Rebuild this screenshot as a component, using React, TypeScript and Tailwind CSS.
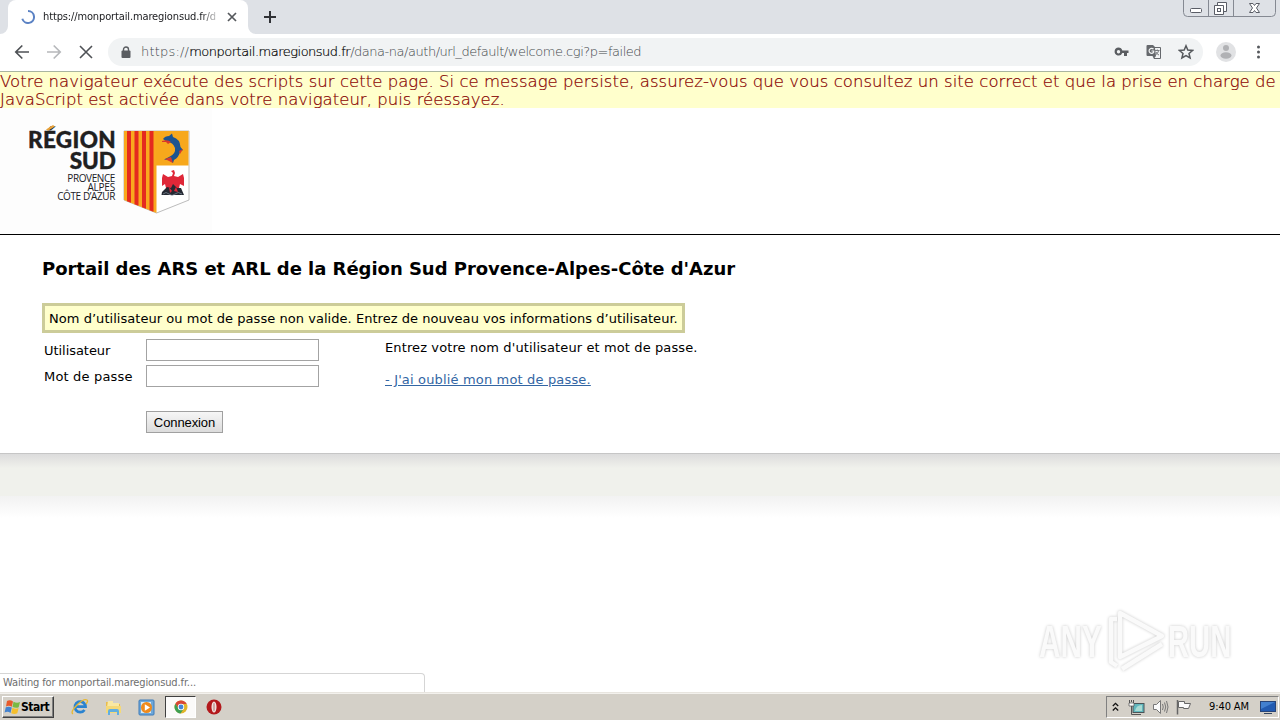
import React from "react";

const verdana = "font-['DejaVu_Sans',Verdana,sans-serif]";
const tahoma = "font-['DejaVu_Sans_Condensed','DejaVu_Sans',Tahoma,sans-serif] [font-stretch:condensed]";

function TabStrip() {
  return (
    <div className="relative flex h-[34px] shrink-0 bg-[#dee1e6] pl-2">
      <div className="relative flex h-[34px] w-[240px] items-center rounded-t-lg bg-white pl-[13px]">
        <svg className="absolute -left-2 bottom-0" width="8" height="8"><path d="M8 0V8H0A8 8 0 0 0 8 0Z" fill="#fff" /></svg>
        <svg className="absolute -right-2 bottom-0" width="8" height="8"><path d="M0 0V8H8A8 8 0 0 1 0 0Z" fill="#fff" /></svg>
        <svg width="14" height="14" viewBox="0 0 14 14" fill="none">
          <path d="M7 1A6 6 0 1 1 1.3 8.8" stroke="#5b82c4" strokeWidth="2" />
        </svg>
        <div className={`${tahoma} ml-2 w-[175px] overflow-hidden whitespace-nowrap text-[11px] leading-4 tracking-[-0.13px] text-[#202124] [mask-image:linear-gradient(to_right,#000_158px,transparent_178px)]`}>
          https://monportail.maregionsud.fr/d
        </div>
        <svg className="ml-[9px]" width="10" height="10" viewBox="0 0 10 10" stroke="#55585c" strokeWidth="1.7"><path d="M1 1 9 9M9 1 1 9" /></svg>
      </div>
      <svg className="ml-[15px] mt-[10px]" width="14" height="14" viewBox="0 0 14 14" stroke="#303236" strokeWidth="2"><path d="M7 1V13M1 7H13" /></svg>
      <svg className="ml-auto mr-[4px]" width="93" height="17" viewBox="0 0 93 17" fill="none">
        <path d="M.5 0V12.5Q.5 16.5 4.5 16.5H88.5Q92.5 16.5 92.5 12.5V0M25.5 0V16M50.5 0V16" stroke="#858992" />
        <rect x="7.5" y="8.5" width="11" height="4" rx="1" fill="#fff" stroke="#5a5d66" />
        <path d="M34.5 2.5H43.5V11.5H34.5Z" fill="#fff" stroke="#5a5d66" />
        <path d="M31.5 5.5H40.5V14.5H31.5Z" fill="#fff" stroke="#5a5d66" />
        <rect x="34.5" y="8.5" width="3" height="3" stroke="#5a5d66" />
        <path d="M66.5 3.5H70L71.5 5.5 73 3.5H76.5L73.5 8 76.5 12.500H73L71.5 10.5 70 12.5H66.5L69.5 8Z" fill="#fff" stroke="#5a5d66" />
      </svg>
    </div>
  );
}

function Toolbar() {
  return (
    <div className="flex h-[38px] shrink-0 items-center border-b border-[#a9b5a0] bg-white pl-[14px]">
      <svg className="-mt-px" width="16" height="16" viewBox="0 0 16 16" fill="none" stroke="#4f5256" strokeWidth="1.7"><path d="M15 8H2M8.3 1.500 1.8 8 8.3 14.5" /></svg>
      <svg className="-mt-px ml-4" width="16" height="16" viewBox="0 0 16 16" fill="none" stroke="#b6b8bb" strokeWidth="1.7"><path d="M1 8H14M7.7 1.500 14.2 8 7.7 14.5" /></svg>
      <svg className="-mt-px ml-4" width="16" height="16" viewBox="0 0 16 16" fill="none" stroke="#4f5256" strokeWidth="1.6"><path d="M2 2 14 14M14 2 2 14" /></svg>
      <div className="-mt-px ml-[14px] flex h-7 w-[1095px] items-center rounded-full bg-[#f1f3f4] pl-[13px]">
        <svg width="10" height="13" viewBox="0 0 10 13"><path d="M2.5 5V3.5a2.5 2.5 0 0 1 5 0V5" fill="none" stroke="#5a5d61" strokeWidth="1.4" /><rect x="0.5" y="4.5" width="9" height="7.5" rx="1" fill="#5a5d61" /></svg>
        <div className="ml-[10px] whitespace-nowrap font-['DejaVu_Sans',sans-serif] text-[13px] font-extralight leading-5 text-[#43474b]">
          <span className="tracking-[0.2px]">https://</span><span className="tracking-[-0.5px] text-black [-webkit-text-stroke:0.2px_#000]">monportail.maregionsud.fr</span><span className="tracking-[-0.47px]">/dana-na/auth/url_default/welcome.cgi?p=failed</span>
        </div>
        <svg className="ml-auto" width="15" height="10" viewBox="0 0 15 10" fill="#5a5d61"><path fillRule="evenodd" d="M4.500.500a4 4 0 1 0 3.800 5.500H10V9H13V6H14.500V3.500H8.300A4 4 0 0 0 4.500.500ZM4.500 3A1.700 1.700 0 1 1 4.500 6.400 1.700 1.700 0 0 1 4.500 3Z" /></svg>
        <svg className="ml-[17px]" width="16" height="16" viewBox="0 0 16 16">
          <path d="M1.500 1H7L9 3H14Q15 3 15 4V14Q15 15 14 15H8L6.500 12H1.500Q.500 12 .500 11V2Q.500 1 1.500 1Z" fill="#65686c" />
          <path d="M9 4H14V14H8.500L10 12Z" fill="#f1f3f4" />
          <path d="M7.500 5.200A2.500 2.500 0 1 0 7.700 8.200V7H5.500" fill="none" stroke="#f1f3f4" strokeWidth="1.2" />
          <path d="M9 6.500H13.500M11.300 5.500V6.500M12.700 6.500Q12 9.500 9.500 11M10 8Q11 10.500 13 11" fill="none" stroke="#777a7e" />
        </svg>
        <svg className="ml-4 mr-[9px]" width="16" height="16" viewBox="0 0 16 16"><path d="M8 1.800 9.800 6.100 14.500 6.500 11 9.500 12.100 14 8 11.600 3.900 14 5 9.500 1.500 6.500 6.200 6.100Z" fill="none" stroke="#55585c" strokeWidth="1.5" /></svg>
      </div>
      <svg className="-mt-[2px] ml-[13px]" width="20" height="20" viewBox="0 0 20 20"><circle cx="10" cy="10" r="10" fill="#e1e2e4" /><circle cx="10" cy="6" r="3" fill="#b0b1b4" /><ellipse cx="10" cy="13.5" rx="5.5" ry="3.3" fill="#b0b1b4" /></svg>
      <svg className="-mt-px ml-5" width="5" height="16" viewBox="0 0 5 16" fill="#55585c"><circle cx="2.5" cy="3" r="1.5" /><circle cx="2.5" cy="8" r="1.5" /><circle cx="2.5" cy="13" r="1.5" /></svg>
    </div>
  );
}

function Shield() {
  return (
    <svg className="ml-[7px] mt-[22px]" width="67" height="86" viewBox="0 0 67 86">
      <path d="M1 1H66V70L33.5 83 1 70Z" fill="#fff" stroke="#bcbcbc" />
      <path d="M1 1H33.5V83L1 70Z" fill="#f9a81e" />
      <path d="M4 1H8V72.800L4 71.200ZM11.500 1H15.500V75.800L11.500 74.200ZM19 1H23V78.800L19 77.200ZM26.500 1H30.500V81.800L26.500 80.200Z" fill="#e42a1f" />
      <path d="M33 1H65.500V35.500H33Z" fill="#f7a81c" />
      <path d="M40 9Q42 6 46 6L49 3.500 50 7Q57 9 57.500 17L60 20 57 22Q56 27 51 30L50 33 46 30 41 29.500 46 27Q53 24 52 18Q50 12 44 12Z" fill="#1b5490" />
      <path d="M39 11Q45 9 48 12L45 14 43 12 39 12ZM42 29 48 27 50 33 46 31ZM56 21 60 19 57 24Z" fill="#d9382b" />
      <path d="M48 41 51 40 52 43 51 46 55 47 60 44 61 48V56L57 54 56 58H43L42 54 39 56V48L40 44 45 47 49 46 50 43Z" fill="#df2738" />
      <path d="M39 62 44 57 48 58 50 54 54 58 58 58 61 65H38.500Z" fill="#252933" />
      <path d="M46 57 49 61 47 63ZM53 57 55 62 51 61Z" fill="#df2738" />
      <path d="M40 64Q43 61 46 64T52 64T59 64" stroke="#8792a0" strokeWidth=".7" fill="none" />
    </svg>
  );
}

function RegionLogo() {
  return (
    <div className="flex h-[126px] w-[212px] bg-[#fdfdfd]">
      <div className="flex w-[116px] flex-col items-end whitespace-nowrap pt-[21px] text-right font-['Open_Sans',sans-serif] text-[#20201f]">
        <div className="relative font-['Lato',sans-serif] text-[22.5px] font-black leading-[21px] tracking-[0.35px] [-webkit-text-stroke:0.4px_#20201f]">
          RÉGION
          <svg className="absolute left-[18px] top-[-4px]" width="10" height="6"><path d="M0 4.500 7 0 9 1.500 2 5.800Z" fill="#e8a33b" /></svg>
        </div>
        <div className="font-['Lato',sans-serif] text-[22.5px] font-black leading-[21px] [-webkit-text-stroke:0.4px_#20201f]">SUD</div>
        <div className="mr-px mt-[3px] text-[10px] leading-[9px] tracking-[-0.4px]">PROVENCE</div>
        <div className="mr-px text-[10px] leading-[9px] tracking-[-0.2px]">ALPES</div>
        <div className="mr-px text-[10px] leading-[9px] tracking-[-0.4px]">CÔTE D’AZUR</div>
      </div>
      <Shield />
    </div>
  );
}

function LoginForm() {
  return (
    <main className={`${verdana} flex h-[218px] shrink-0 flex-col items-start bg-white pl-[42px] pt-[22px] text-[13px] leading-4 text-black`}>
      <h1 className="whitespace-nowrap text-[18px] font-bold leading-[23px] tracking-[-0.03px]">Portail des ARS et ARL de la Région Sud Provence-Alpes-Côte d'Azur</h1>
      <div className="mt-[23px] flex h-[30px] w-[643px] items-center whitespace-nowrap border-[3px] border-[#cccc99] bg-[#ffffcc] pl-1 pt-[2px] tracking-[0.042px]">
        Nom d’utilisateur ou mot de passe non valide. Entrez de nouveau vos informations d’utilisateur.
      </div>
      <div className="flex pl-[2px] pt-[6px]">
        <div className="grid grid-cols-[102px_173px] gap-y-1">
          <label className="pt-[4px] tracking-[-0.05px]">Utilisateur</label>
          <input className="h-[22px] border border-[#a3a3a3] bg-white" />
          <label className="pt-[4px] tracking-[0.18px]">Mot de passe</label>
          <input className="h-[22px] border border-[#a3a3a3] bg-white" />
          <button className="col-start-2 mt-5 h-[22px] w-[77px] border border-[#a0a0a0] bg-linear-to-b from-[#f6f6f6] to-[#dcdcdc] pt-px font-['Liberation_Sans',sans-serif] text-[13px] leading-[20px] tracking-[-0.1px]">Connexion</button>
        </div>
        <div className="ml-[66px] whitespace-nowrap pt-px">
          <p className="tracking-[0.11px]">Entrez votre nom d'utilisateur et mot de passe.</p>
          <p className="mt-4 tracking-[0.16px] text-[#3366a4] underline">- J'ai oublié mon mot de passe.</p>
        </div>
      </div>
    </main>
  );
}

function Watermark() {
  return (
    <div className="absolute left-[1039px] top-[608px] flex h-[66px] items-center font-['Liberation_Sans',sans-serif] text-[45px] font-bold leading-none text-[#fafafa] [filter:drop-shadow(0_0_1.5px_#c8c8c8)]">
      <span className="w-[67px] origin-left scale-x-[0.66] whitespace-nowrap">ANY</span>
      <svg width="60" height="64" viewBox="0 0 60 64" fill="none" stroke="#fafafa" strokeWidth="4.5" strokeLinejoin="round">
        <path d="M14 4 56 27 14 48Z" /><path d="M11 10H5V53L11 57M16 60 56 35" />
      </svg>
      <span className="ml-[2px] w-[66px] origin-left scale-x-[0.65] whitespace-nowrap">RUN</span>
    </div>
  );
}

function StartFlag() {
  return (
    <svg width="17" height="17" viewBox="0 0 17 17">
      <path d="M3 2Q6 .5 9 2.5L7.800 7.800Q5 6 2 7.500Z" fill="#e75a2b" />
      <path d="M9.500 2.800Q13 4.500 16 3L14.700 8.200Q12 9.500 8.500 8Z" fill="#79b943" />
      <path d="M1.800 8.200Q5 7 7.800 8.500L6.500 14Q4 12 .6 13.500Z" fill="#4382cf" />
      <path d="M8.400 8.800Q12 10.500 14.600 9L13.300 14.300Q10.500 15.500 7.200 14.200Z" fill="#f5bf2d" />
    </svg>
  );
}

function Taskbar() {
  return (
    <div className="flex h-[28px] shrink-0 items-center border-t border-[#e8e5df] bg-[#d4d0c8] pl-[2px] pt-[1px] [box-shadow:inset_0_1px_#f3f1ed]">
      <div className={`${tahoma} flex h-[22px] w-[52px] items-center border border-b-[#404040] border-l-white border-r-[#404040] border-t-white pl-px text-[12px] font-bold text-black [box-shadow:inset_-1px_-1px_#808080]`}>
        <StartFlag /><span className="tracking-[-0.5px]">Start</span>
      </div>
      <svg className="ml-[17px]" width="18" height="18" viewBox="0 0 18 18" fill="none">
        <path d="M13.500 12A5.300 5.300 0 1 1 14.500 8.700H5" stroke="#2a83d0" strokeWidth="2.8" />
        <path d="M2 16Q-1 14 6 7T16 2Q17.500 3 15 6" stroke="#e8b830" strokeWidth="1.3" />
      </svg>
      <svg className="ml-4" width="17" height="17" viewBox="0 0 17 17">
        <path d="M1 3H7L8 5H15V14H1Z" fill="#e9bd4d" /><path d="M3 2H8V4H14V8H2Z" fill="#f9e8a3" /><path d="M1 7H16V14H1Z" fill="#f5d978" /><path d="M3 16V12Q3 10 5 10H12Q14 10 14 12V16H12V13H5V16Z" fill="#61aee0" />
      </svg>
      <svg className="ml-4" width="17" height="17" viewBox="0 0 17 17">
        <rect x="1" y="1" width="15" height="15" rx="1" fill="#6ea8da" stroke="#3d7bb9" /><rect x="3" y="3" width="10" height="11" fill="#d7ebf7" /><circle cx="8.5" cy="8.5" r="5.5" fill="#ef8a1c" /><path d="M6.800 5.300 12 8.500 6.800 11.700Z" fill="#fff" />
      </svg>
      <div className="ml-[10px] flex h-[22px] w-[31px] items-center justify-center border border-b-white border-l-[#404040] border-r-white border-t-[#404040] bg-[#fbfaf9]">
        <svg width="14" height="14" viewBox="0 0 14 14">
          <circle cx="7" cy="7" r="6.5" fill="#e1b52a" /><path d="M1.400 3.700A6.500 6.500 0 0 1 12.700 3.900H7L4.500 8.500Z" fill="#d84736" /><path d="M1.400 3.700A6.500 6.500 0 0 0 6.500 13.500L9.500 9 4.500 8.500Z" fill="#3d9f52" /><circle cx="7" cy="7" r="3.2" fill="#fff" /><circle cx="7" cy="7" r="2.4" fill="#4285d8" />
        </svg>
      </div>
      <svg className="ml-[10px]" width="16" height="16" viewBox="0 0 16 16"><circle cx="8" cy="8" r="7.5" fill="#b3191c" /><ellipse cx="8" cy="8" rx="2.5" ry="5.5" fill="#f6e9e6" /><ellipse cx="8" cy="8" rx="1.2" ry="4.5" fill="#cfaaa5" /></svg>
      <div className="ml-auto mr-px flex h-[22px] w-[173px] items-center border border-b-white border-l-[#808080] border-r-white border-t-[#808080] pl-[5px]">
        <svg width="7" height="10" viewBox="0 0 7 10" fill="none" stroke="#111" strokeWidth="1.3"><path d="M.8 4 3.500 1.300 6.200 4M.8 8.500 3.500 5.800 6.200 8.500" /></svg>
        <svg className="ml-[9px]" width="17" height="17" viewBox="0 0 17 17" fill="none"><rect x="5" y="4.5" width="11" height="9" fill="#62b7bd" stroke="#4b5457" /><path d="M7 12Q8 6 14 6V12Z" fill="#a9dbd3" /><path d="M1.500 1V4.500H5.500V1M3.500 4.500V15.500H13M3.500 1V3" stroke="#555" /><path d="M1 4H6V7H1Z" fill="#fff" stroke="#555" strokeWidth=".7" /></svg>
        <svg className="ml-[7px]" width="17" height="16" viewBox="0 0 17 16" fill="none" stroke="#777"><path d="M1.500 5.500H4.500L8.500 1.500V14.500L4.500 10.500H1.500Z" fill="#fafafa" /><path d="M10.500 5Q12 8 10.500 11M12.500 3.500Q15 8 12.500 12.500M14.500 2Q17.500 8 14.500 14" /></svg>
        <svg className="ml-[7px]" width="16" height="16" viewBox="0 0 16 16"><path d="M1.500 1V15.500" stroke="#666" strokeWidth="1.5" /><path d="M2.500 2.500H8.500V4.500H14.500L12.500 9.500H7.500V8.500H2.500Z" fill="#fafafa" stroke="#666" /></svg>
        <span className={`${tahoma} ml-[17px] w-[42px] whitespace-nowrap pt-px text-[11px] tracking-[-0.1px] text-black`}>9:40 AM</span>
        <svg className="ml-[9px]" width="16" height="15" viewBox="0 0 16 15"><rect x=".5" y="1.5" width="15" height="10" fill="#225bb1" stroke="#274478" /><path d="M1 2H15L1 9Z" fill="#4280cf" /><path d="M4 13.500H12" stroke="#34455f" /></svg>
      </div>
    </div>
  );
}

export default function App() {
  return (
    <div className="relative flex h-[720px] w-[1280px] flex-col overflow-hidden bg-white">
      <TabStrip />
      <Toolbar />
      <div className={`${verdana} h-[36px] shrink-0 whitespace-nowrap bg-[#ffffcc] pt-px text-[16.5px] font-extralight leading-[18px] text-[#800000] [-webkit-text-stroke:0.2px_#900000]`}>
        <div className="tracking-[0.035px]">Votre navigateur exécute des scripts sur cette page. Si ce message persiste, assurez-vous que vous consultez un site correct et que la prise en charge de</div>
        <div className="tracking-[0.02px]">JavaScript est activée dans votre navigateur, puis réessayez.</div>
      </div>
      <header className="h-[127px] shrink-0 border-b border-black bg-white"><RegionLogo /></header>
      <LoginForm />
      <footer className="shrink-0">
        <div className="h-[43px] border-t border-[#c6c6c6] bg-[linear-gradient(to_bottom,#dcdcdc_0px,#f0f1ec_14px)]" />
        <div className="h-[22px] bg-linear-to-b from-[#f2f2f2] to-white" />
      </footer>
      <div className="flex grow flex-col items-start justify-end">
        <div className={`${tahoma} flex h-[19px] w-[425px] items-center rounded-tr border-r border-t border-[#d5d5d5] bg-white pl-[3px] pt-px text-[11px] tracking-[-0.12px] text-[#6e6e6e]`}>Waiting for monportail.maregionsud.fr...</div>
      </div>
      <Taskbar />
      <Watermark />
    </div>
  );
}
